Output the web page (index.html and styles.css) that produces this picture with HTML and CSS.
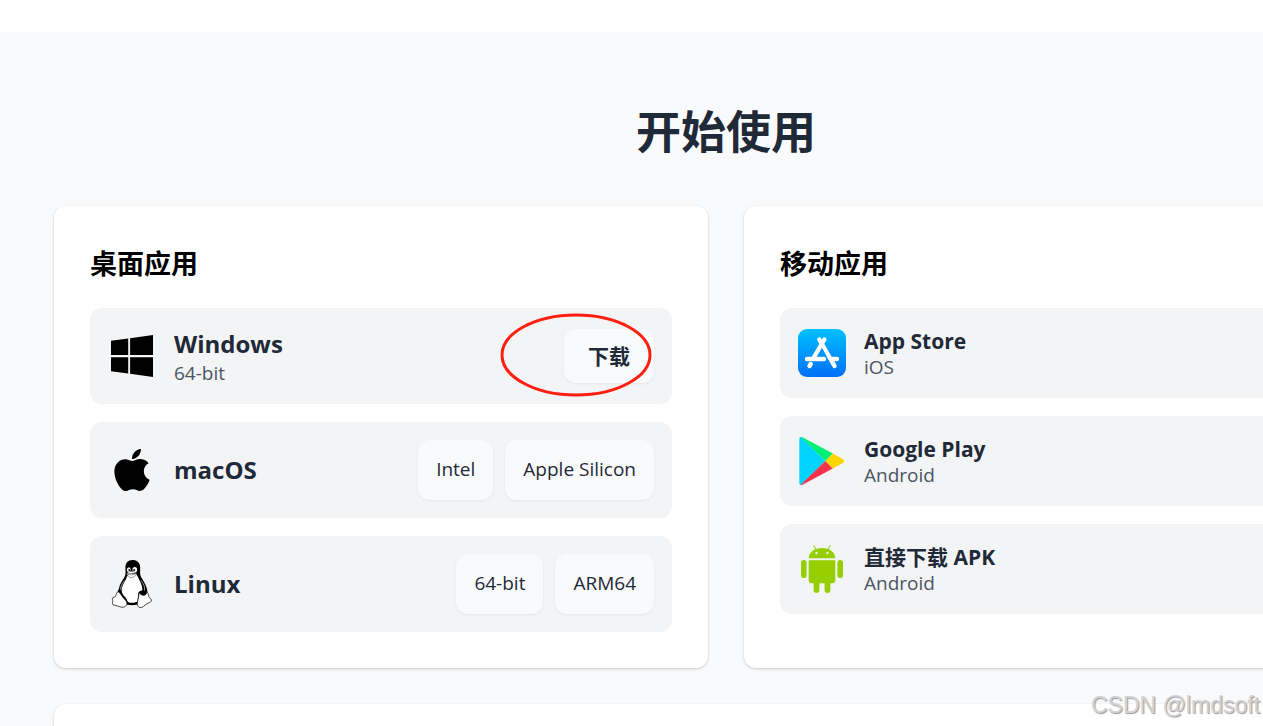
FILE: index.html
```
<!DOCTYPE html>
<html lang="zh-CN">
<head>
  <meta charset="UTF-8">
  <meta name="viewport" content="width=device-width, initial-scale=1.0">
  <title>开始使用</title>
  <link rel="stylesheet" href="styles.css">
</head>
<body>
  <section class="download">
    <h1 class="download-title">开始使用</h1>

    <div class="card-grid">
      <!-- 桌面应用 -->
      <div class="card">
        <h2 class="card-title">桌面应用</h2>
        <div class="list">
          <div class="row desktop">
            <svg class="icon" viewBox="-32 0 512 512" aria-hidden="true">
              <path d="M0 93.7l183.6-25.3v177.4H0V93.7zm0 324.6l183.6 25.3V268.4H0v149.9zm203.8 28L448 480V268.4H203.8v177.9zm0-380.6v180.1H448V32L203.8 65.7z"/>
            </svg>
            <div class="info">
              <div class="name">Windows</div>
              <div class="sub">64-bit</div>
            </div>
            <button type="button" class="btn btn-main">下载</button>
            <svg class="mark" viewBox="0 0 152 84" aria-hidden="true">
              <ellipse cx="76" cy="42" rx="74" ry="40" fill="none" stroke="#ff1f10" stroke-width="3"/>
            </svg>
          </div>

          <div class="row desktop">
            <svg class="icon" viewBox="-64 0 512 512" aria-hidden="true">
              <path d="M318.7 268.7c-.2-36.7 16.4-64.4 50-84.8-18.8-26.9-47.2-41.7-84.7-44.6-35.5-2.8-74.3 20.7-88.5 20.7-15 0-49.4-19.7-76.4-19.7C63.3 141.2 4 184.8 4 273.5q0 39.3 14.4 81.2c12.8 36.7 59 126.7 107.2 125.2 25.2-.6 43-17.9 75.8-17.9 31.8 0 48.3 17.9 76.4 17.9 48.6-.7 90.4-82.5 102.6-119.3-65.2-30.7-61.7-90-61.7-91.9zm-56.6-164.2c27.3-32.4 24.8-61.9 24-72.5-24.1 1.4-52 16.4-67.9 34.9-17.5 19.8-27.8 44.3-25.6 71.9 26.1 2 49.9-11.4 69.5-34.3z"/>
            </svg>
            <div class="info">
              <div class="name">macOS</div>
            </div>
            <div class="btn-group">
              <button type="button" class="btn">Intel</button>
              <button type="button" class="btn">Apple Silicon</button>
            </div>
          </div>

          <div class="row desktop">
            <svg class="icon" viewBox="0 0 48 48" aria-hidden="true">
              <path d="M24.500 0C20 0 17.300 3 17.400 7.500C17.500 12 18.200 14.500 16 18C13 22.500 11.500 25 11 28.500C9.800 31 9.500 32 9.300 34L16 43C20 46 28 46 32 43L39.500 33C39.500 27.500 36.500 22.500 34 18.500C31.500 15 32.200 12 32.200 7.500C32.200 2.500 29 0 24.500 0Z"/>
              <path fill="#fff" d="M19 16.500C18.200 20 15.200 23 14 27.500C13 31.500 14 34 17.500 37.500C19.500 40 19 42 21 42.500C24 43 27 42.800 29.500 41.500L30.500 32.500C32 30.500 34 30.700 34.400 30C34.600 25.500 31.500 20.500 29.500 16L28 14H21Z"/>
              <path fill="none" stroke="#fff" stroke-width=".6" d="M12.500 29.500C12.600 26 15 23 16.500 20.500M33 20.500C36 24.500 37 27 36.500 30.500"/>
              <ellipse cx="20.800" cy="9.700" rx="1.900" ry="2.500" fill="#fff"/>
              <ellipse cx="26.800" cy="9.700" rx="2.300" ry="2.700" fill="#fff"/>
              <circle cx="21.300" cy="10" r=".9"/>
              <circle cx="26.200" cy="10" r="1"/>
              <path fill="#fff" stroke="#000" stroke-width=".4" d="M18.700 13.500C20.300 11.700 22.500 11 23.700 11.200C25 11.300 27 12.200 28.600 13C28.800 14.900 25.700 17.600 23.200 17.600C21.300 17.600 19 15.500 18.700 13.500ZM19 13.700C22 15.400 25 15.200 28.300 13.200"/>
              <path fill="#fff" stroke="#000" stroke-width=".7" d="M9.500 31.800C12 31.600 13.500 36.200 15.700 38.300C18.200 40.700 19.700 43 18.500 45C17.600 46.600 16 47.400 14 47.300C11 46.700 8 45.200 5.200 44.700C3.600 44 5 42 4.700 40.500C4.200 38.500 4 37.500 6 37.200C8.400 36.800 7.700 34 9.500 31.800Z"/>
              <path fill="#fff" stroke="#000" stroke-width=".7" d="M31.200 32.500C30.700 35 30.700 38 29.700 41C28.700 44.500 29.500 47 32 47.500C35 47.900 36.500 45 40 43.200C42.500 42 43.800 41.500 43.500 40C42.500 38.500 40.800 37.500 40.300 34.500C39.800 32.300 39 31.500 38.500 32.500C38 36.500 33 36 31.200 32.500Z"/>
              <ellipse cx="35.500" cy="33" rx="3" ry="2"/>
            </svg>
            <div class="info">
              <div class="name">Linux</div>
            </div>
            <div class="btn-group">
              <button type="button" class="btn">64-bit</button>
              <button type="button" class="btn">ARM64</button>
            </div>
          </div>
        </div>
      </div>

      <!-- 移动应用 -->
      <div class="card">
        <h2 class="card-title">移动应用</h2>
        <div class="list">
          <a class="row mobile" href="#ios">
            <svg class="icon" viewBox="0 0 48 48" aria-hidden="true">
              <defs>
                <linearGradient id="store" x1="0" y1="0" x2="0" y2="1">
                  <stop offset="0" stop-color="#00c1ff"/>
                  <stop offset="1" stop-color="#006ff8"/>
                </linearGradient>
              </defs>
              <rect width="48" height="48" rx="9" fill="url(#store)"/>
              <g fill="none" stroke="#fff" stroke-width="4.400" stroke-linecap="round">
                <path d="M9 30H26M34.500 30H39"/>
                <path d="M26.300 10.500L15.500 29M12.700 35L11.500 37"/>
                <path d="M21.300 10.500L36.500 37"/>
              </g>
              <path d="M23.800 19.500L28.200 27.300" stroke="#0098fc" stroke-width="1"/>
            </svg>
            <div class="info">
              <div class="name">App Store</div>
              <div class="sub">iOS</div>
            </div>
          </a>

          <a class="row mobile" href="#google-play">
            <svg class="icon" viewBox="0 0 48 48" aria-hidden="true">
              <path fill="#00d3ff" d="M1.300 2Q1.300 .2 3 0L27.300 24L3 48Q1.300 47.800 1.300 46Z"/>
              <path fill="#00ef76" d="M2.500 0Q3.500-.2 5 .6L34.800 16.500L27.300 24Z"/>
              <path fill="#f8334a" d="M2.500 48Q3.500 48.200 5 47.400L34.800 31.500L27.300 24Z"/>
              <path fill="#ffd500" d="M34.800 16.500L44.800 22Q47.400 24 44.800 26L34.800 31.500L27.300 24Z"/>
            </svg>
            <div class="info">
              <div class="name">Google Play</div>
              <div class="sub">Android</div>
            </div>
          </a>

          <a class="row mobile" href="#apk">
            <svg class="icon" viewBox="0 0 48 48" aria-hidden="true">
              <g fill="#96cf00">
                <path d="M10.700 13.300C11 7 16.500 3 24 3S37 7 37.300 13.300Z"/>
                <path d="M10.700 15.300H37.300V35.300Q37.300 38.300 34.300 38.300H13.700Q10.700 38.300 10.700 35.300Z"/>
                <rect x="3" y="15" width="5.600" height="18" rx="2.800"/>
                <rect x="39.400" y="15" width="5.600" height="18" rx="2.800"/>
                <rect x="15.600" y="34" width="5.800" height="14" rx="2.900"/>
                <rect x="26.600" y="34" width="5.800" height="14" rx="2.900"/>
              </g>
              <path d="M15.700 .5L18.300 4.800M32.300 .5L29.700 4.800" stroke="#96cf00" stroke-linecap="round"/>
              <circle cx="18.500" cy="8" r="1.200" fill="#f3f4f6"/>
              <circle cx="29.500" cy="8" r="1.200" fill="#f3f4f6"/>
            </svg>
            <div class="info">
              <div class="name">直接下载 APK</div>
              <div class="sub">Android</div>
            </div>
          </a>
        </div>
      </div>

      <div class="card card-wide"></div>
    </div>
  </section>

  <div class="watermark">CSDN @lmdsoft</div>
</body>
</html>
```
FILE: styles.css
```
* {
  box-sizing: border-box;
}

body {
  position: relative;
  height: 100vh;
  margin: 0;
  padding-top: 32px;
  overflow: hidden;
  background-color: #fff;
  color: #1f2937;
  font-family: "Open Sans", "Noto Sans CJK SC", sans-serif;
}

/* 下载区域，比窗口宽时右侧被裁掉 */
.download {
  min-width: 1452px;
  padding: 70px 54px;
  background-color: #f9fafc;
}

.download-title {
  margin: 0 0 44px;
  font-size: 45px;
  line-height: 60px;
  text-align: center;
}

.card-grid {
  display: grid;
  grid-template-columns: 1fr 1fr;
  gap: 36px;
}

.card {
  padding: 36px;
  border-radius: 12px;
  background-color: #fff;
  box-shadow: 0 1px 3px rgba(0, 0, 0, 0.2);
}

.card-wide {
  grid-column: span 2;
  min-height: 200px;
}

.card-title {
  margin: 0 0 22px;
  color: #000;
  font-size: 27px;
  line-height: 44px;
}

.list {
  display: flex;
  flex-direction: column;
  gap: 18px;
}

/* 每个平台一行 */
.row {
  position: relative;
  display: flex;
  align-items: center;
  gap: 18px;
  padding: 18px;
  border-radius: 12px;
  background-color: #f3f4f6;
  color: #1f2937;
  text-decoration: none;
}

.desktop {
  min-height: 96px;
}

.mobile {
  min-height: 90px;
}

.icon {
  flex: none;
  width: 48px;
  height: 48px;
}

.info {
  flex: 1;
}

.name {
  font-weight: 700;
}

.desktop .name {
  font-size: 24px;
  line-height: 34px;
}

.mobile .name {
  font-size: 21px;
  line-height: 28px;
}

.sub {
  color: #4b5563;
  font-size: 19px;
  line-height: 24px;
}

.btn-group {
  display: flex;
  gap: 12px;
}

.btn {
  padding: 17px 18px 19px;
  border: none;
  border-radius: 12px;
  background-color: #f9fafc;
  box-shadow: 0 1px 3px rgba(0, 0, 0, 0.06);
  color: #1f2937;
  font-family: inherit;
  font-size: 19px;
  line-height: 24px;
  cursor: pointer;
}

.btn-main {
  padding: 12px 24px;
  font-size: 21px;
  font-weight: 700;
  line-height: 30px;
}

/* 红圈标注下载按钮 */
.mark {
  position: absolute;
  top: 5px;
  right: 20px;
  width: 152px;
  height: 84px;
  pointer-events: none;
}

.watermark {
  position: absolute;
  right: 3px;
  bottom: 6px;
  color: #d2d3d4;
  font-family: "Liberation Sans", Arial, sans-serif;
  font-size: 23px;
  line-height: 30px;
  text-shadow: 1px 1px 1px #999;
}
```
